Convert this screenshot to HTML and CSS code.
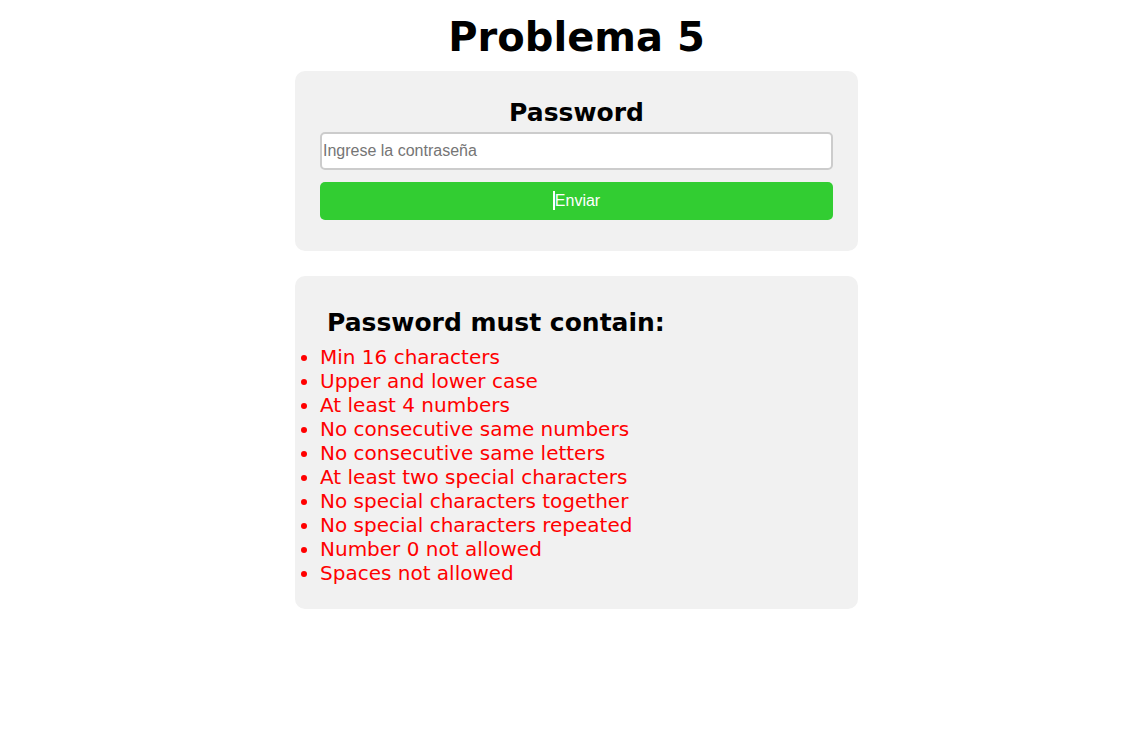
FILE: index.html
```html
<!DOCTYPE html>
<html lang="es">
<head>
<meta charset="utf-8">
<title>Problema 5</title>
<link rel="stylesheet" href="styles.css">
</head>
<body>
<h1 class="title">Problema 5</h1>
<div class="card form-card">
  <h2 class="card-title">Password</h2>
  <input class="pw-input" type="password" placeholder="Ingrese la contraseña">
  <button class="send-btn"><span class="caret"></span>Enviar</button>
</div>
<div class="card rules-card">
  <h3 class="rules-title">Password must contain:</h3>
  <ul class="rules">
    <li>Min 16 characters</li>
    <li>Upper and lower case</li>
    <li>At least 4 numbers</li>
    <li>No consecutive same numbers</li>
    <li>No consecutive same letters</li>
    <li>At least two special characters</li>
    <li>No special characters together</li>
    <li>No special characters repeated</li>
    <li>Number 0 not allowed</li>
    <li>Spaces not allowed</li>
  </ul>
</div>
</body>
</html>
```

FILE: styles.css
```css
body {
  margin: 0;
  padding-left: 26px;
  font-family: "DejaVu Sans", Verdana, sans-serif;
  display: flex;
  flex-direction: column;
  align-items: center;
  background: #fff;
}
.title {
  font-size: 40px;
  font-weight: bold;
  margin: 14px 0 11px;
  line-height: 46px;
}
.card {
  width: 563px;
  box-sizing: border-box;
  background: #f1f1f1;
  border-radius: 10px;
}
.form-card {
  padding: 26px 25px 31px;
  display: flex;
  flex-direction: column;
}
.card-title {
  text-align: center;
  font-size: 25px;
  margin: 0 0 3px;
  line-height: 32px;
}
.pw-input {
  height: 38px;
  box-sizing: border-box;
  border: 2px solid #ccc;
  border-radius: 5px;
  padding: 0 1px;
  font-family: "Liberation Sans", Arial, sans-serif;
  font-size: 16px;
  background: #fff;
  outline: none;
}
.pw-input::placeholder { color: #757575; }
.send-btn {
  margin-top: 12px;
  height: 38px;
  border: none;
  border-radius: 5px;
  background: #32cd32;
  color: #fff;
  font-family: "Liberation Sans", Arial, sans-serif;
  font-size: 16px;
  padding: 0 6px 2px;
}
.caret {
  display: inline-block;
  width: 2px;
  height: 19px;
  background: #fff;
  vertical-align: -4px;
}
.rules-card {
  margin-top: 25px;
  padding: 33px 0 24px;
}
.rules-title {
  font-size: 25px;
  margin: 0 0 8px 32px;
  line-height: 28px;
}
.rules {
  margin: 0;
  padding-left: 25px;
  color: #ff0000;
  font-size: 20px;
  line-height: 24px;
}
```
